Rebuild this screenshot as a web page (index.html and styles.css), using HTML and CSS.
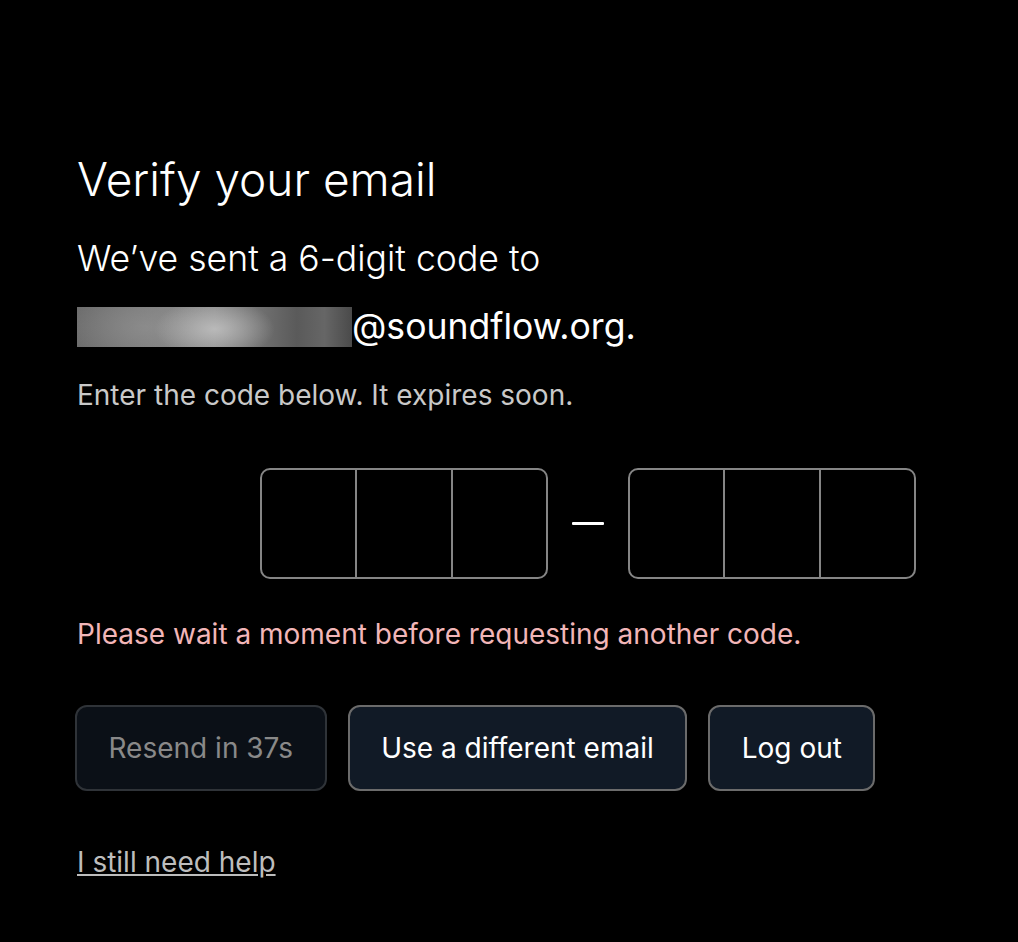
FILE: index.html
```html
<!DOCTYPE html>
<html>
	<head>
		<meta charset="UTF-8">
		<title>Verify your email</title>
		<link rel="stylesheet" href="styles.css">
	</head>
	<body>
		<!--验证邮箱-->
		<div class="verify">
			<h1 class="title">Verify your email</h1>
			<p class="sent">We’ve sent a 6-digit code to</p>
			<p class="email"><span class="redact"></span>@soundflow.org.</p>
			<p class="hint">Enter the code below. It expires soon.</p>

			<div class="otp">
				<div class="otp-group">
					<input class="cell" type="text" maxlength="1">
					<input class="cell" type="text" maxlength="1">
					<input class="cell" type="text" maxlength="1">
				</div>
				<span class="dash"></span>
				<div class="otp-group">
					<input class="cell" type="text" maxlength="1">
					<input class="cell" type="text" maxlength="1">
					<input class="cell" type="text" maxlength="1">
				</div>
			</div>

			<p class="error">Please wait a moment before requesting another code.</p>

			<div class="actions">
				<button class="btn disabled" disabled>Resend in 37s</button>
				<button class="btn">Use a different email</button>
				<button class="btn">Log out</button>
			</div>

			<a class="help" href="#">I still need help</a>
		</div>
	</body>
</html>
```

FILE: styles.css
```css
body,h1,p{
	margin: 0;
	padding: 0;
}
body{
	background: #000;
	font-family: Inter, "Liberation Sans", sans-serif;
	color: #fff;
}
.verify{
	padding: 152px 0 0 77px;
}
.title{
	font-size: 46px;
	font-weight: 300;
	line-height: 54px;
}
.sent{
	margin-top: 32px;
	font-size: 35.6px;
	font-weight: 300;
	line-height: 42px;
}
.email{
	display: flex;
	align-items: center;
	margin-top: 27px;
	height: 40px;
	font-size: 35.6px;
	line-height: 40px;
}
.redact{
	display: block;
	width: 275px;
	height: 40px;
	background:
		radial-gradient(ellipse 60px 30px at 50% 55%, rgba(190,190,190,.9), rgba(190,190,190,0)),
		radial-gradient(ellipse 90px 40px at 25% 50%, rgba(150,150,150,.6), rgba(150,150,150,0)),
		linear-gradient(90deg, #6a6a6a, #7e7e7e 30%, #8c8c8c 50%, #5a5a5a 80%, #666 90%, #4a4a4a);
}
.hint{
	margin-top: 31px;
	font-size: 28px;
	line-height: 34px;
	color: #c9c9c9;
}
.otp{
	display: flex;
	align-items: center;
	margin: 56px 0 0 183px;
}
.otp-group{
	display: flex;
	width: 284px;
	height: 107px;
	border: 2px solid #858585;
	border-radius: 10px;
	overflow: hidden;
}
.cell{
	flex: 1;
	min-width: 0;
	margin: 0;
	padding: 0;
	border: none;
	background: transparent;
	color: #fff;
	font-family: inherit;
	font-size: 40px;
	text-align: center;
	outline: none;
}
.cell + .cell{
	border-left: 2px solid #858585;
}
.dash{
	display: block;
	width: 32px;
	height: 3px;
	margin: 0 24px;
	background: #fff;
	border-radius: 1px;
}
.error{
	margin-top: 38px;
	font-size: 28px;
	line-height: 34px;
	color: #f2b6b8;
}
.actions{
	display: flex;
	gap: 21px;
	margin-top: 54px;
	margin-left: -2px;
}
.btn{
	height: 86px;
	padding: 0 31.5px;
	border: 2px solid #6b6b6b;
	border-radius: 12px;
	background: #111a26;
	color: #fff;
	font-family: inherit;
	font-size: 28px;
	cursor: pointer;
}
.btn.disabled{
	background: #0b1017;
	border-color: #2f3338;
	color: #898989;
	cursor: default;
}
.help{
	display: inline-block;
	margin-top: 54px;
	font-size: 28px;
	line-height: 34px;
	color: #bdbdbd;
}
```
